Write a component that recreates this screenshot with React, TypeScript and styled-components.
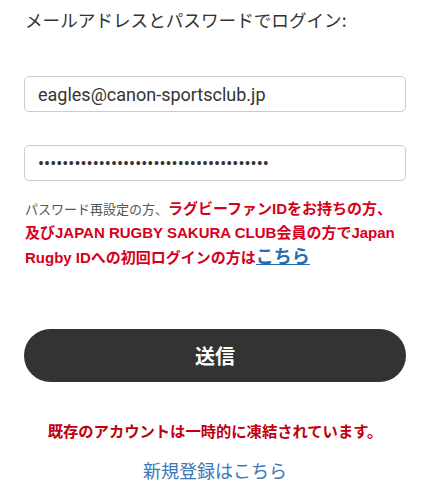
import React from "react";
import styled, { createGlobalStyle } from "styled-components";

const Global = createGlobalStyle`
  html, body { margin: 0; padding: 0; background: #fff; }
  body { font-family: "Liberation Sans", "Noto Sans CJK JP", sans-serif; }
`;

const Page = styled.div`
  width: 430px;
  padding: 8px 24px 0 24px;
  box-sizing: border-box;
  display: flex;
  flex-direction: column;
`;

const Title = styled.div`
  font-family: "Noto Sans CJK JP", sans-serif;
  font-size: 17.6px;
  line-height: 24px;
  color: #333;
  padding-left: 1px;
`;

const Field = styled.input`
  box-sizing: border-box;
  width: 382px;
  height: 36px;
  border: 1px solid #c9ccd1;
  border-radius: 5px;
  padding: 0 13px;
  font-family: Roboto, "Noto Sans CJK JP", sans-serif;
  font-size: 18px;
  color: #333;
  outline: none;
  margin-top: ${(p: { $mt: number }) => p.$mt}px;
`;

const Notice = styled.p`
  margin: 16px 0 0 0;
  padding-left: 1px;
  line-height: 24px;
  font-family: "Liberation Sans", "Noto Sans CJK JP", sans-serif;
`;

const Gray = styled.span`
  font-size: 13px;
  color: #555;
  font-family: "Noto Sans CJK JP", sans-serif;
`;

const Red = styled.span`
  font-size: 15px;
  font-weight: bold;
  color: #d6001c;
`;

const Link = styled.a`
  font-size: 18px;
  font-weight: bold;
  color: #2a6cb0;
  text-decoration: underline;
`;

const Submit = styled.button`
  margin-top: 59px;
  width: 382px;
  height: 53px;
  border: none;
  border-radius: 27px;
  background: #333;
  color: #fff;
  font-family: "Noto Sans CJK JP", sans-serif;
  font-weight: bold;
  font-size: 20px;
`;

const Frozen = styled.div`
  margin-top: 37px;
  text-align: center;
  font-family: "Noto Sans CJK JP", sans-serif;
  font-weight: bold;
  font-size: 15.3px;
  line-height: 22px;
  color: #c00010;
`;

const Register = styled.a`
  margin-top: 16px;
  text-align: center;
  font-family: "Noto Sans CJK JP", sans-serif;
  font-size: 18px;
  line-height: 26px;
  color: #3b78b6;
  text-decoration: none;
`;

export default function App() {
  return (
    <>
      <Global />
      <Page>
        <Title>メールアドレスとパスワードでログイン:</Title>
        <Field $mt={44} type="text" defaultValue="eagles@canon-sportsclub.jp" />
        <Field $mt={33} type="password" defaultValue="••••••••••••••••••••••••••••••••••••••" />
        <Notice>
          <Gray>パスワード再設定の方、</Gray>
          <Red>ラグビーファンIDをお持ちの方、及びJAPAN RUGBY SAKURA CLUB会員の方でJapan Rugby IDへの初回ログインの方は</Red>
          <Link href="#">こちら</Link>
        </Notice>
        <Submit>送信</Submit>
        <Frozen>既存のアカウントは一時的に凍結されています。</Frozen>
        <Register href="#">新規登録はこちら</Register>
      </Page>
    </>
  );
}
